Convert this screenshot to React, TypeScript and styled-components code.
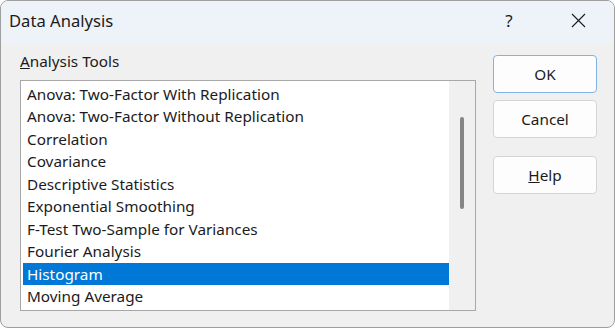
import React from "react";
import styled, { createGlobalStyle } from "styled-components";

const Global = createGlobalStyle`
  html, body { margin: 0; padding: 0; background: #ffffff; }
  body { font-family: "Noto Sans", "Open Sans", sans-serif; }
  * { box-sizing: border-box; }
`;

const Window = styled.div`
  width: 615px;
  height: 328px;
  border: 1px solid #9e9e9e;
  border-radius: 8px;
  background: #f0f0f0;
  overflow: hidden;
  display: flex;
  flex-direction: column;
  color: #1b1b1b;
`;

const TitleBar = styled.div`
  height: 43px;
  background: #eef2f9;
  display: flex;
  align-items: center;
  padding-left: 8px;
`;

const Title = styled.div`
  flex: 1;
  font-size: 16.6px;
  padding-bottom: 4px;
`;

const TitleButton = styled.div<{ $w: number }>`
  width: ${(p) => p.$w}px;
  height: 43px;
  display: flex;
  align-items: center;
  justify-content: center;
  font-size: 17px;
  color: #1b1b1b;
  padding-bottom: 4px;
`;

const Body = styled.div`
  flex: 1;
  display: flex;
  padding: 0 15px 0 19px;
  gap: 17px;
`;

const LeftCol = styled.div`
  width: 456px;
  display: flex;
  flex-direction: column;
`;

const Label = styled.div`
  height: 36px;
  font-size: 15.3px;
  display: flex;
  align-items: center;
  padding-bottom: 2px;
`;

const ListBox = styled.div`
  height: 231px;
  border: 1px solid #a8a8a8;
  background: #ffffff;
  display: flex;
`;

const Items = styled.div`
  flex: 1;
  padding: 2px 0 0 2px;
`;

const Item = styled.div<{ $selected?: boolean }>`
  height: 22.44px;
  line-height: 22px;
  padding-left: 4px;
  font-size: 15.3px;
  white-space: nowrap;
  background: ${(p) => (p.$selected ? "#0078d7" : "transparent")};
  color: ${(p) => (p.$selected ? "#ffffff" : "#1b1b1b")};
`;

const Track = styled.div`
  width: 26px;
  background: #f0f0f0;
  display: flex;
  justify-content: center;
  padding-top: 36px;
  padding-right: 1px;
`;

const Thumb = styled.div`
  width: 4px;
  height: 92px;
  border-radius: 2px;
  background: #858585;
`;

const RightCol = styled.div`
  width: 104px;
  display: flex;
  flex-direction: column;
  padding-top: 11px;
`;

const Button = styled.div<{ $default?: boolean; $gap: number }>`
  height: 38px;
  margin-bottom: ${(p) => p.$gap}px;
  border: 1px solid ${(p) => (p.$default ? "#7fb3e6" : "#d5d5d5")};
  border-radius: 4px;
  background: #fdfdfd;
  display: flex;
  align-items: center;
  justify-content: center;
  font-size: 15.3px;
  color: #1b1b1b;
`;

const Spacer = styled.div`
  width: 7px;
`;

const items = [
  "Anova: Two-Factor With Replication",
  "Anova: Two-Factor Without Replication",
  "Correlation",
  "Covariance",
  "Descriptive Statistics",
  "Exponential Smoothing",
  "F-Test Two-Sample for Variances",
  "Fourier Analysis",
  "Histogram",
  "Moving Average",
];

export default function App() {
  return (
    <>
      <Global />
      <Window>
        <TitleBar>
          <Title>Data Analysis</Title>
          <TitleButton $w={80}>?</TitleButton>
          <TitleButton $w={58}>
            <svg width="15" height="15" viewBox="0 0 15 15">
              <path d="M1 1 L14 14 M14 1 L1 14" stroke="#1b1b1b" strokeWidth="1.1" fill="none" />
            </svg>
          </TitleButton>
          <Spacer />
        </TitleBar>
        <Body>
          <LeftCol>
            <Label>
              <span>
                <u>A</u>nalysis Tools
              </span>
            </Label>
            <ListBox>
              <Items>
                {items.map((t) => (
                  <Item key={t} $selected={t === "Histogram"}>
                    {t}
                  </Item>
                ))}
              </Items>
              <Track>
                <Thumb />
              </Track>
            </ListBox>
          </LeftCol>
          <RightCol>
            <Button $default $gap={7}>OK</Button>
            <Button $gap={18}>Cancel</Button>
            <Button $gap={0}>
              <span>
                <u>H</u>elp
              </span>
            </Button>
          </RightCol>
        </Body>
      </Window>
    </>
  );
}
